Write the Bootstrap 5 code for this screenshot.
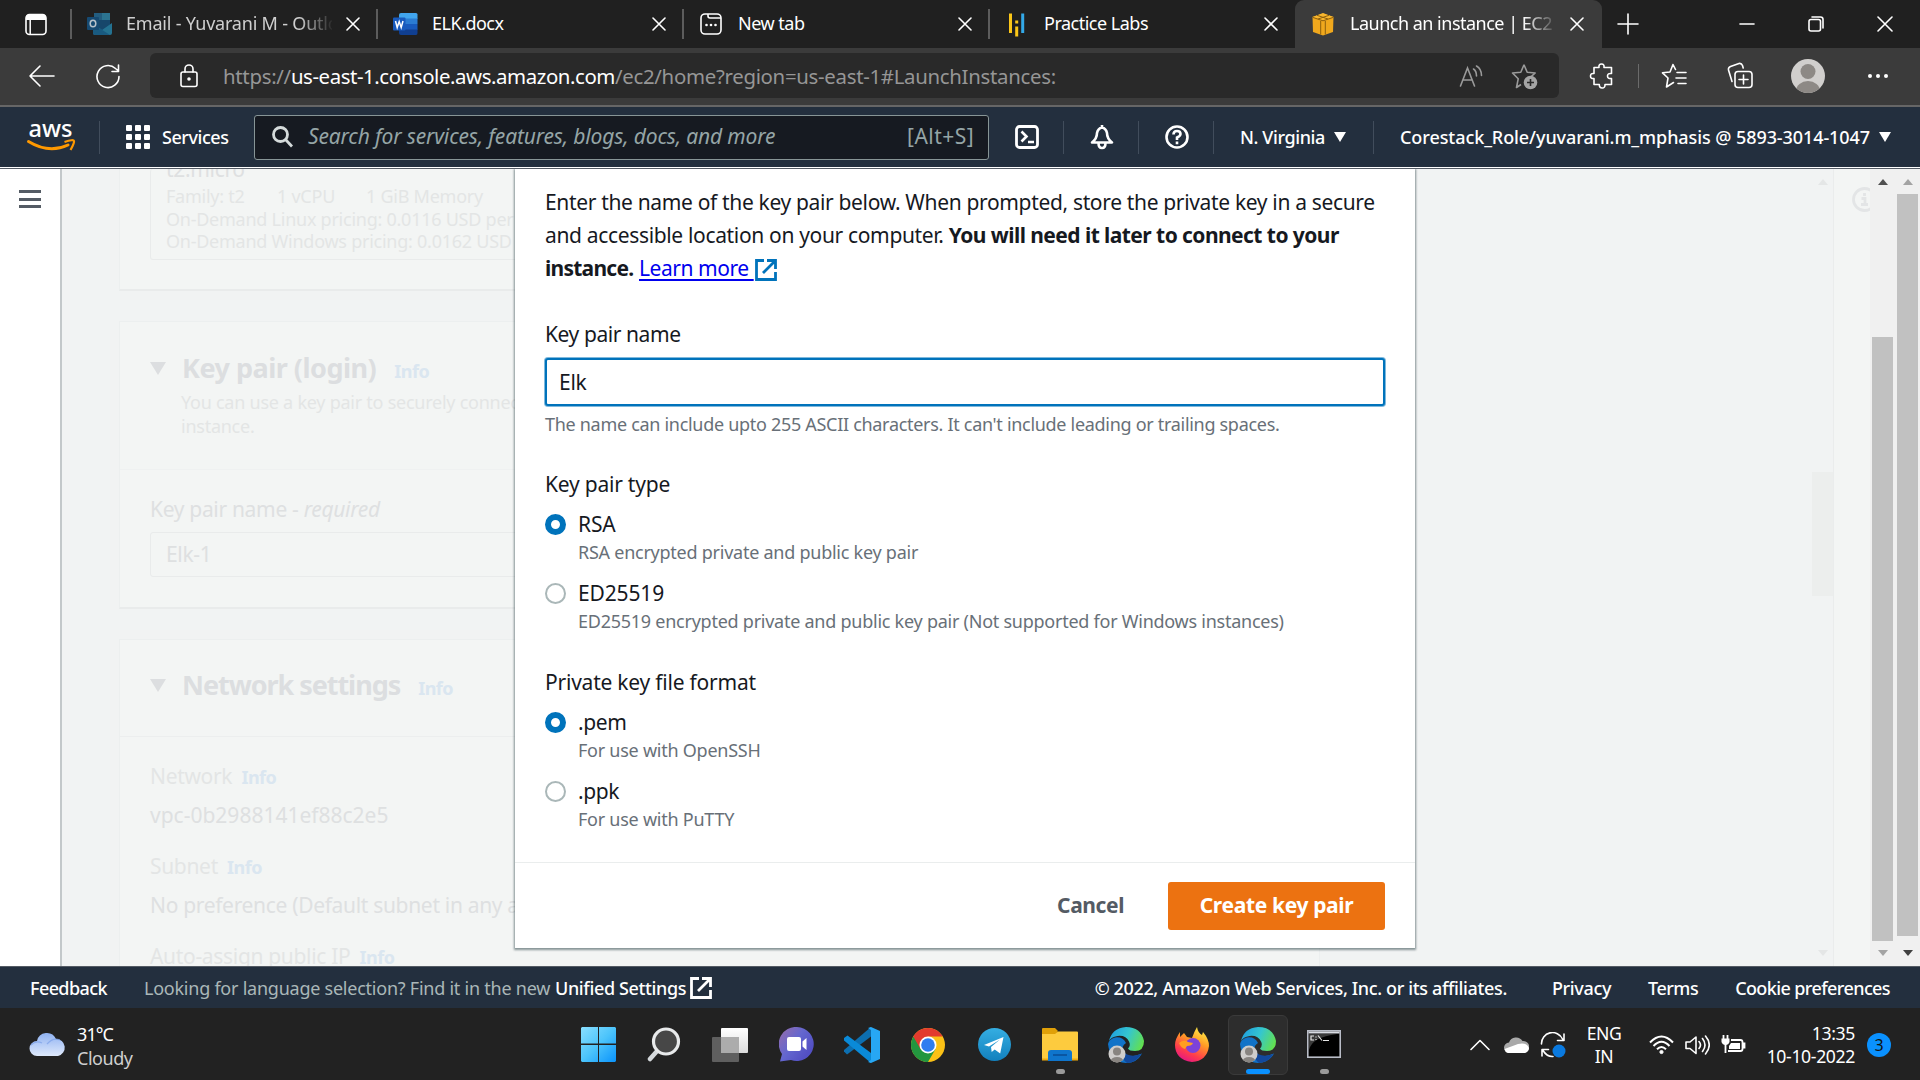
<!DOCTYPE html>
<html lang="en">
<head>
<meta charset="utf-8">
<meta name="viewport" content="width=device-width, initial-scale=1">
<title>Launch an instance | EC2 Management Console</title>
<link href="https://cdn.jsdelivr.net/npm/bootstrap@5.3.0/dist/css/bootstrap.min.css" rel="stylesheet">
<style>
  body { font-family: "Noto Sans", "Open Sans", sans-serif; width: 1920px; height: 1080px; overflow: hidden; color: #16191f; background: #f2f3f3; }
  svg { display: block; flex: none; }
  .ln { fill: none; stroke: #fff; stroke-width: 1.6; stroke-linecap: round; stroke-linejoin: round; }
  .nowrap-row { white-space: nowrap; }

  /* browser tabs */
  .tabstrip { height: 48px; background: #202020; font-size: 18px; color: #fff; }
  .tab-menu { width: 71px; padding-left: 25px; }
  .btab { width: 306px; height: 48px; padding: 0 17px 1px 14px; }
  .btab::before { content: ""; width: 2px; height: 30px; background: #5c5c5c; margin-left: -15px; margin-right: 15px; }
  .btab svg { margin-right: 14px; }
  .btab svg.x { margin-right: 0; }
  .btab-title { flex: 1; overflow: hidden; letter-spacing: -.5px; }
  .btab-title.fade-end { margin-right: 14px; -webkit-mask-image: linear-gradient(90deg, #000 84%, transparent 101%); mask-image: linear-gradient(90deg, #000 84%, transparent 101%); }
  .btab.active { background: #3b3b3b; border-radius: 9px 9px 0 0; width: 307px; padding-right: 18px; }
  .btab.active::before { background: transparent; }
  .tab-dim { letter-spacing: -.2px; color: #cfcfcf; }
  .w-ctl { gap: 44px; padding-right: 27px; }

  /* address row */
  .toolbar { height: 59px; background: #3b3b3b; border-bottom: 2px solid #666; padding: 0 31px 2px 28px; }
  .addr { width: 1409px; height: 45px; background: #292929; border-radius: 6px; margin-left: 29px; padding: 1px 21px 0 30px; font-size: 20.4px; color: #969696; letter-spacing: -.3px; }
  .addr b { font-weight: 400; color: #fff; letter-spacing: -.42px; }
  .v-rule { width: 1px; background: #6b6b6b; height: 24px; }

  /* console header */
  .console-head { height: 60px; background: #232f3e; color: #fff; font-size: 18px; font-weight: 500; padding-left: 27px; }
  .head-edge { height: 2px; background: #fff; border-bottom: 1px solid #545b64; }
  .h-sep { width: 1px; height: 33px; background: #414d5c; }
  .find-box { width: 735px; height: 45px; background: #161a21; border: 1px solid #879596; border-radius: 3px; margin-left: 25px; padding: 0 14px 0 17px; color: #95a5a6; font-size: 21px; font-weight: 400; letter-spacing: -.15px; }
  .caret { width: 0; height: 0; border: 6px solid transparent; border-top: 10px solid #fff; border-bottom: 0; }

  /* page */
  .stage { height: 797px; background: #f1f3f3; overflow: hidden; }
  .side { width: 62px; background: #fff; border-right: 2px solid #c3c8ca; padding: 21px 0 0 19px; }
  .side span { display: block; width: 22px; height: 3px; background: #545b64; margin-bottom: 4.5px; }
  .backdrop-area { flex: 1; padding-left: 57px; color: #e3e5e5; }
  .panel { width: 1201px; background: #f3f5f4; border: 1px solid #ecefef; border-bottom: 2px solid #e9ebeb; }
  .panel h2 { font-size: 27px; font-weight: 700; line-height: 36px; letter-spacing: -.5px; color: #dcdee0; margin: 0; }
  .panel .tight { letter-spacing: -1.05px; }
  .nfo { font-size: 18px; line-height: 20px; font-weight: 700; color: #dae6f0; letter-spacing: -.5px; }
  .t18 { font-size: 18px; line-height: 24px; letter-spacing: -.25px; }
  .t21 { font-size: 21px; line-height: 33px; letter-spacing: -.32px; }
  .strong-faint { color: #dee0e1; }
  .ghost-box { border: 1px solid #e9ebeb; border-radius: 3px; }
  .ghost-caret { width: 0; height: 0; border: 8px solid transparent; border-top: 13px solid #dcdee0; border-bottom: 0; margin-right: 16px; }
  .p1 { display: flow-root; height: 122px; padding: 0 30px 30px; }
  .p1 .ghost-box { display: flow-root; height: 91px; padding: 0 15px; }
  .p1 .cut { margin-top: -16px; line-height: 32px; }

  .kdialog { left: 515px; top: 169px; width: 900px; height: 779px; background: #fff; box-shadow: 0 1px 2px 1px rgba(0,28,36,.45); clip-path: inset(0 -4px -4px -4px); }
  .k-body { height: 694px; padding: 17px 30px 0; border-bottom: 1px solid #eaeded; }
  .k-body b { letter-spacing: -.56px; }
  .k-lbl { font-size: 21px; line-height: 33px; letter-spacing: -.22px; }
  .k-field { margin: 7px 0 5px; width: 840px; height: 48px; border: 2px solid #0073bb; border-radius: 3px; box-shadow: 0 0 0 1px #0073bb80; outline: 0; font-size: 21px; padding: 0 12px; letter-spacing: -.3px; color: #16191f; }
  .k-hint { font-size: 18px; line-height: 27px; color: #687078; letter-spacing: -.25px; }
  .k-opt { font-size: 21px; line-height: 30px; letter-spacing: -.15px; }
  .k-opt-row { margin-top: 12px; gap: 12px; }
  .k-lbl + .k-opt-row { margin-top: 8px; }
  .k-radio { width: 21px; height: 21px; border: 2px solid #aab7b8; border-radius: 50%; margin-top: 5px; flex: none; background: #fff; }
  .k-radio.on { border: 6.5px solid #0073bb; }
  .k-link { color: #0000ee; text-decoration: underline; text-underline-offset: 3px; text-decoration-thickness: 2px; letter-spacing: -.45px; }
  .k-foot { height: 85px; padding: 0 30px 0; }
  .k-go { width: 217px; height: 48px; background: #ec7211; color: #fff; border: 0; border-radius: 3px; font-size: 21px; font-weight: 700; padding: 0; letter-spacing: -.35px; }
  .k-cancel { font-size: 21px; font-weight: 700; color: #545b64; padding: 0; border: 0; margin-right: 44px; letter-spacing: -.4px; }

  .rail { width: 25px; background: #f0f0f0; padding: 10px 2px; }
  .rail .thumb { width: 21px; background: #c1c1c1; }
  .tri-u, .tri-d { width: 0; height: 0; border: 5.5px solid transparent; margin: 0 auto; }
  .tri-u { border-bottom: 6px solid #a3a3a3; border-top: 0; }
  .tri-d { border-top: 6px solid #a3a3a3; border-bottom: 0; margin-top: auto; }
  .tri-u.dark { border-bottom-color: #505050; }
  .tri-d.dark { border-top-color: #404040; }
  .tri-u.pale { border-bottom-color: #e4e6e6; }
  .tri-d.pale { border-top-color: #e4e6e6; }
  .inner-rail { width: 22px; padding: 10px 0; border-right: 1px solid #eaecec; }
  .inner-rail .thumb { width: 21px; height: 124px; margin-top: 287px; background: #eceeed; }
  .help-rail { width: 36px; background: #f3f5f4; overflow: hidden; padding: 18px 0 0 18px; }

  .console-foot { height: 42px; background: #232f3e; border-top: 1px solid #545b64; color: #fff; font-size: 18px; font-weight: 500; padding: 1px 30px 0; letter-spacing: -.36px; }
  .soft-copy { color: #aab7b8; font-weight: 400; letter-spacing: -.24px; }

  /* taskbar */
  .taskbar { height: 72px; background: #222; color: #fff; font-size: 18px; line-height: 24px; }
  .weather { width: 568px; padding-left: 29px; gap: 10px; letter-spacing: -.45px; }
  .dock { gap: 6px; }
  .app { width: 60px; height: 60px; border-radius: 6px; margin-top: 1px; }
  .app.current { background: #2d2d2d; border: 1px solid #3a3a3a; }
  .app .run { bottom: 1px; left: 26px; width: 9px; height: 5px; border-radius: 3px; background: #9a9a9a; }
  .app.current .run { left: 17px; width: 24px; background: #0a91ff; bottom: 0; }
  .tray { padding: 1px 29px 0 0; }
  .clock { width: 100px; font-size: 17.6px; letter-spacing: -.35px; line-height: 23px; margin-left: 9px; }
  .count { width: 24px; height: 24px; background: #0a91ff; color: #111; font-size: 16px; border-radius: 50%; margin-left: 12px; }
</style>
</head>
<body class="nowrap-row">

<!-- browser tab strip -->
<div class="tabstrip d-flex align-items-center">
  <div class="tab-menu"><svg width="22" height="23" viewBox="0 0 22 23"><rect x="1" y="1.5" width="20" height="20" rx="3.5" fill="none" stroke="#fff" stroke-width="1.6"/><path d="M1 7V4.5Q1 1.5 4 1.5H18Q21 1.500 21 4.5V7Z" fill="#fff"/><path d="M5.200 7V21" stroke="#fff" stroke-width="1.500"/></svg></div>

  <div class="btab d-flex align-items-center">
    <svg width="25" height="24" viewBox="0 0 25 24"><rect x="7" y="1" width="16" height="20" rx="1.500" fill="#17476b"/><path d="M7 1h8v7H7z" fill="#235d80"/><path d="M15 1h8v7h-8z" fill="#2c7491"/><path d="M6 11l9 7 10-7v10q0 2-2 2H8q-2 0-2-2z" fill="#247291"/><path d="M6 12l17 11H8q-2 0-2-2z" fill="#195a80"/><rect y="5" width="12" height="13" rx="1" fill="#164a72"/><ellipse cx="6" cy="11.500" rx="2.800" ry="3.300" fill="none" stroke="#b7c2cb" stroke-width="1.500"/></svg>
    <div class="btab-title fade-end tab-dim">Email - Yuvarani M - Outlook</div>
    <svg class="x ln" width="14" height="14" viewBox="0 0 14 14"><path d="M1 1l12 12M13 1L1 13"/></svg>
  </div>
  <div class="btab d-flex align-items-center">
    <svg width="25" height="24" viewBox="0 0 25 24"><path d="M6 3q0-2 2-2h15q1.500 0 1.500 1.500V7H6z" fill="#41a5ee"/><path d="M6 6.500h18.500V12H6z" fill="#2b7cd3"/><path d="M6 12h18.500v6H6z" fill="#185abd"/><path d="M6 17.500h18.500V21q0 2-1.500 2H8q-2 0-2-2z" fill="#103f91"/><rect y="5.500" width="12.500" height="13" rx="1" fill="#185abd"/><path d="M2.500 9l1.700 6.500L6.200 9.500l2 6L10 9" fill="none" stroke="#fff" stroke-width="1.500"/></svg>
    <div class="btab-title">ELK.docx</div>
    <svg class="x ln" width="14" height="14" viewBox="0 0 14 14"><path d="M1 1l12 12M13 1L1 13"/></svg>
  </div>
  <div class="btab d-flex align-items-center">
    <svg width="25" height="24" viewBox="0 0 25 24"><g fill="none" stroke="#fff" stroke-width="1.600"><rect x="2" y="2" width="20" height="20" rx="4"/><path d="M9 2v2q0 2 2 2h11"/></g><g fill="#fff"><circle cx="7.500" cy="13" r="1.300"/><circle cx="12" cy="13" r="1.300"/><circle cx="16.500" cy="13" r="1.300"/></g></svg>
    <div class="btab-title">New tab</div>
    <svg class="x ln" width="14" height="14" viewBox="0 0 14 14"><path d="M1 1l12 12M13 1L1 13"/></svg>
  </div>
  <div class="btab d-flex align-items-center">
    <svg width="25" height="26" viewBox="0 0 25 26"><path d="M4 2.500h3v19.500H4zM10.200 15.500h3v10h-3zM10.200 9.500h3v3h-3z" fill="#fbc618"/><path d="M16.200 2.500h3v19.500h-3z" fill="#33a9e8"/></svg>
    <div class="btab-title">Practice Labs</div>
    <svg class="x ln" width="14" height="14" viewBox="0 0 14 14"><path d="M1 1l12 12M13 1L1 13"/></svg>
  </div>
  <div class="btab active d-flex align-items-center">
    <svg width="25" height="24" viewBox="0 0 25 24"><path d="M1.500 5L12 1.500 22.500 5 22 20l-10 3.500L2 20z" fill="#f0a81d"/><path d="M1.500 5L12 1l10.500 4L12 8.500z" fill="#f8b62e"/><path d="M1.500 5.300L12 8.800l10.500-3.500M9.700 9v13.500M14.300 9v13.500M6 3.300L17 7M18 3.300L7 7" fill="none" stroke="#8d5f0e" stroke-width="1"/></svg>
    <div class="btab-title fade-end">Launch an instance | EC2 Management Console</div>
    <svg class="x ln" width="14" height="14" viewBox="0 0 14 14"><path d="M1 1l12 12M13 1L1 13"/></svg>
  </div>
  <svg class="ln" width="22" height="22" viewBox="0 0 22 22" style="margin-left:15px"><path d="M11 1v20M1 11h20"/></svg>
  <div class="w-ctl d-flex align-items-center ms-auto">
    <svg class="ln" width="16" height="16" viewBox="0 0 16 16"><path d="M1 8h14"/></svg>
    <svg class="ln" width="16" height="16" viewBox="0 0 16 16" style="margin-left:9px"><rect x="1" y="3.500" width="11.500" height="11.500" rx="2"/><path d="M4 1h8.500Q15 1 15 3.500V12"/></svg>
    <svg class="ln" width="16" height="16" viewBox="0 0 16 16" style="margin-left:9px"><path d="M1 1l14 14M15 1L1 15"/></svg>
  </div>
</div>

<!-- address row -->
<div class="toolbar d-flex align-items-center">
  <svg class="ln" width="27" height="24" viewBox="0 0 27 24"><path d="M26 12H2M12 2L2 12l10 10"/></svg>
  <svg class="ln" width="26" height="26" viewBox="0 0 26 26" style="margin-left:40px"><path d="M24 13.500A11 11 0 1 1 20.500 5.500L23.500 8M23.500 2v6.500h-6.500"/></svg>
  <div class="addr d-flex align-items-center">
    <svg class="ln" width="18" height="26" viewBox="0 0 18 26"><rect x="1" y="9" width="16" height="14.500" rx="2"/><path d="M5 9V6a4 4 0 0 1 8 0v3"/><circle cx="9" cy="16" r="1" fill="#fff"/></svg>
    <div style="margin-left:25px">https://<b>us-east-1.console.aws.amazon.com</b>/ec2/home?region=us-east-1#LaunchInstances:</div>
    <svg class="ms-auto" width="24" height="24" viewBox="0 0 24 24" fill="none" stroke="#9a9a9a" stroke-width="1.600" stroke-linecap="round"><path d="M1.500 22L8.500 4l7 18M4 16h9M14.500 5q3 2 3 7M17.500 2q5 3 5 9.500"/></svg>
    <svg width="27" height="27" viewBox="0 0 27 27" style="margin-left:28px"><path d="M13 1.800l3.200 7.400 8 .8-5.800 5.200 1 4M10 21.500l-4.500 3 1.700-8.700L1.500 10l8.300-.8L13 1.800" fill="none" stroke="#9a9a9a" stroke-width="1.600" stroke-linejoin="round"/><circle cx="19.500" cy="19.500" r="6.800" fill="#a4a4a4"/><path d="M19.500 16v7M16 19.500h7" stroke="#292929" stroke-width="1.600"/></svg>
  </div>
  <svg class="ln" width="25" height="26" viewBox="0 0 25 26" style="margin-left:30px"><path d="M5 4.500h5q-.5-3.500 2.500-3.500t2.500 3.500H22.500v6q-4-.5-4 2.500t4 2.500v6h-6.500q.2 3.500-2.800 3.500t-2.900-3.500H5v-6Q1.500 16 1.500 13T5 10.500z"/></svg>
  <div class="v-rule" style="margin-left:24px"></div>
  <svg class="ln" width="26" height="26" viewBox="0 0 26 26" style="margin-left:22px"><path d="M16 9.500h9M15 15h10M17 20.500h8M14.500 6.500L12 1.500 9 9l-7.500.8L7 15 5.500 24l7-4.500"/></svg>
  <svg class="ln" width="26" height="27" viewBox="0 0 26 27" style="margin-left:40px"><rect x="8" y="9.500" width="17" height="16" rx="3"/><path d="M16.500 13v9M12 17.500h9M5 19.500L1.500 8Q1 5.500 3.500 4.500L12 1.500q2.500-.5 3.500 2l.7 2.500"/></svg>
  <svg width="34" height="34" viewBox="0 0 34 34" style="margin-left:38px"><defs><clipPath id="av"><circle cx="17" cy="17" r="17"/></clipPath></defs><g clip-path="url(#av)"><rect width="34" height="34" fill="#d1cfcd"/><circle cx="17" cy="12.500" r="7.500" fill="#8d8985"/><ellipse cx="17" cy="32" rx="12" ry="10" fill="#8d8985"/></g></svg>
  <svg class="ms-auto" width="22" height="6" viewBox="0 0 22 6" fill="#fff"><circle cx="3" cy="3" r="2"/><circle cx="11" cy="3" r="2"/><circle cx="19" cy="3" r="2"/></svg>
</div>

<!-- console header -->
<nav class="console-head d-flex align-items-center">
  <svg width="48" height="32" viewBox="0 0 48 32" overflow="visible"><text x="1.500" y="16" font-family="Noto Sans" font-size="24" font-weight="500" fill="#fff" textLength="44" lengthAdjust="spacingAndGlyphs">aws</text><path d="M1.500 20.500Q22 33 41 24" fill="none" stroke="#f90" stroke-width="3" stroke-linecap="round"/><path d="M37.500 21q9-3 9.500-1t-3.500 9" fill="none" stroke="#f90" stroke-width="2.200"/></svg>
  <div class="h-sep" style="margin-left:24px"></div>
  <svg width="24" height="24" viewBox="0 0 24 24" fill="#fff" style="margin-left:26px"><rect width="6" height="6" rx="1"/><rect x="9" width="6" height="6" rx="1"/><rect x="18" width="6" height="6" rx="1"/><rect y="9" width="6" height="6" rx="1"/><rect x="9" y="9" width="6" height="6" rx="1"/><rect x="18" y="9" width="6" height="6" rx="1"/><rect y="18" width="6" height="6" rx="1"/><rect x="9" y="18" width="6" height="6" rx="1"/><rect x="18" y="18" width="6" height="6" rx="1"/></svg>
  <div style="width:67px;margin-left:12px;letter-spacing:-.45px">Services</div>
  <div class="find-box d-flex align-items-center">
    <svg width="21" height="22" viewBox="0 0 21 22" fill="none" stroke="#d5dbdb" stroke-width="2.800"><circle cx="8.500" cy="8.500" r="7"/><path d="M13.500 13.500l6.500 7"/></svg>
    <i style="margin-left:15px">Search for services, features, blogs, docs, and more</i>
    <span class="ms-auto" style="letter-spacing:.45px">[Alt+S]</span>
  </div>
  <svg width="24" height="24" viewBox="0 0 24 24" fill="none" stroke="#fff" stroke-width="2.800" style="margin-left:26px"><rect x="1.500" y="1.500" width="21" height="21" rx="3"/><path d="M6.500 6.500l5 5-5 5M13 17h6" stroke-width="2.600"/></svg>
  <div class="h-sep" style="margin-left:24px"></div>
  <svg width="24" height="25" viewBox="0 0 24 25" fill="none" stroke="#fff" stroke-width="2.600" style="margin-left:26px" stroke-linejoin="round"><path d="M2 17.500q5-4 5-9.500 1-4.500 5-5.500 4 1 5 5.500 0 5.500 5 9.500zM12 0v3M8.500 18q0 5 3.500 5t3.500-5"/></svg>
  <div class="h-sep" style="margin-left:24px"></div>
  <svg width="24" height="24" viewBox="0 0 24 24" fill="none" stroke="#fff" stroke-width="2.600" style="margin-left:26px"><circle cx="12" cy="12" r="10.500"/><path d="M8.500 9.500Q8.500 6 12 6t3.500 3Q15.500 11 12 12.500V15M12 16.500v2.700"/></svg>
  <div class="h-sep" style="margin-left:24px"></div>
  <div style="width:86px;margin-left:26px;letter-spacing:-.4px">N. Virginia</div>
  <span class="caret" style="margin-left:8px"></span>
  <div class="h-sep" style="margin-left:27px"></div>
  <div style="width:471px;margin-left:26px;letter-spacing:-.08px">Corestack_Role/yuvarani.m_mphasis @ 5893-3014-1047</div>
  <span class="caret" style="margin-left:8px"></span>
</nav>
<div class="head-edge"></div>

<!-- page behind the dialog -->
<main class="stage d-flex">
  <aside class="side flex-shrink-0"><span></span><span></span><span></span></aside>
  <div class="backdrop-area">
    <section class="panel p1 border-top-0">
      <div class="ghost-box border-top-0">
        <div class="t21 cut strong-faint">t2.micro</div>
        <div class="t18 d-flex" style="line-height:22.500px"><span style="width:111px">Family: t2</span><span style="width:89px">1 vCPU</span><span>1 GiB Memory</span></div>
        <div class="t18" style="line-height:22.500px">On-Demand Linux pricing: 0.0116 USD per Hour</div>
        <div class="t18" style="line-height:22.500px">On-Demand Windows pricing: 0.0162 USD per Hour</div>
      </div>
    </section>
    <section class="panel" style="margin-top:30px;height:288px;padding:28px 0 0 30px">
      <div class="d-flex align-items-center"><span class="ghost-caret"></span><h2>Key pair (login)</h2><span class="nfo" style="margin:5px 0 0 18px">Info</span></div>
      <div class="t18" style="margin:4px 0 0 31px">You can use a key pair to securely connect to your<br>instance.</div>
      <div style="margin:31px 0 0 -30px;border-top:1px solid #eff1f1;height:24px"></div>
      <div class="t21 strong-faint">Key pair name - <i>required</i></div>
      <div class="ghost-box t21 strong-faint" style="height:45px;line-height:42px;margin:6px 30px 0 0;padding-left:15px">Elk-1</div>
    </section>
    <section class="panel" style="margin-top:30px;height:400px;padding:27px 0 0 30px">
      <div class="d-flex align-items-center"><span class="ghost-caret"></span><h2 class="tight">Network settings</h2><span class="nfo" style="margin:5px 0 0 18px">Info</span></div>
      <div style="margin:33px 0 0 -30px;border-top:1px solid #eceeee;height:24px"></div>
      <div class="t21">Network <span class="nfo ms-1">Info</span></div>
      <div class="t21 strong-faint" style="margin-top:6px;letter-spacing:0">vpc-0b2988141ef88c2e5</div>
      <div class="t21" style="margin-top:18px">Subnet <span class="nfo ms-1">Info</span></div>
      <div class="t21 strong-faint" style="margin-top:6px">No preference (Default subnet in any availability zone)</div>
      <div class="t21" style="margin-top:18px">Auto-assign public IP <span class="nfo ms-1">Info</span></div>
    </section>
  </div>
  <div class="inner-rail d-flex flex-column"><span class="tri-u pale"></span><div class="thumb"></div><span class="tri-d pale"></span></div>
  <div class="help-rail"><svg width="25" height="25" viewBox="0 0 25 25" fill="none" stroke="#e3e5e6" stroke-width="2.800"><circle cx="12.500" cy="12.500" r="11"/><path d="M12.500 6v3M9.500 11.500h3.500V17M9 17.500h7"/></svg></div>
  <div class="rail d-flex flex-column"><span class="tri-u dark"></span><div class="thumb" style="margin-top:152px;height:604px"></div><span class="tri-d"></span></div>
  <div class="rail d-flex flex-column"><span class="tri-u"></span><div class="thumb" style="margin-top:9px;height:742px"></div><span class="tri-d dark"></span></div>
</main>

<!-- create key pair dialog -->
<div class="kdialog position-absolute">
  <div class="k-body">
    <div class="t21" style="letter-spacing:-.34px">Enter the name of the key pair below. When prompted, store the private key in a secure<br>and accessible location on your computer. <b>You will need it later to connect to your</b><br>
      <div class="d-flex"><b style="width:88px;letter-spacing:-.75px">instance.</b><a href="#" class="k-link" style="margin-left:6px;white-space:pre">Learn more </a><svg width="22" height="22" viewBox="0 0 22 22" fill="none" stroke="#0073bb" stroke-width="2.800" style="margin:7px 0 0 1px"><path d="M9 1.500H1.500v19h19V13M12 1.500h8.500V10M20 2L8 14"/></svg></div>
    </div>
    <div class="k-lbl" style="margin-top:33px;letter-spacing:-.42px">Key pair name</div>
    <input class="k-field d-block" type="text" value="Elk">
    <div class="k-hint" style="letter-spacing:-.3px">The name can include upto 255 ASCII characters. It can't include leading or trailing spaces.</div>
    <div class="k-lbl" style="margin-top:30px">Key pair type</div>
    <div class="k-opt-row d-flex"><span class="k-radio on"></span><div><div class="k-opt">RSA</div><div class="k-hint">RSA encrypted private and public key pair</div></div></div>
    <div class="k-opt-row d-flex"><span class="k-radio"></span><div><div class="k-opt">ED25519</div><div class="k-hint">ED25519 encrypted private and public key pair (Not supported for Windows instances)</div></div></div>
    <div class="k-lbl" style="margin-top:31px">Private key file format</div>
    <div class="k-opt-row d-flex"><span class="k-radio on"></span><div><div class="k-opt" style="letter-spacing:-.4px">.pem</div><div class="k-hint">For use with OpenSSH</div></div></div>
    <div class="k-opt-row d-flex"><span class="k-radio"></span><div><div class="k-opt" style="letter-spacing:-.4px">.ppk</div><div class="k-hint">For use with PuTTY</div></div></div>
  </div>
  <div class="k-foot d-flex align-items-center justify-content-end">
    <button class="btn k-cancel">Cancel</button>
    <button class="btn k-go">Create key pair</button>
  </div>
</div>

<!-- console footer -->
<footer class="console-foot d-flex align-items-center">
  <div style="width:114px;letter-spacing:-.6px">Feedback</div>
  <div class="soft-copy" style="width:411px">Looking for language selection? Find it in the new</div>
  <div>Unified Settings</div>
  <svg width="22" height="22" viewBox="0 0 22 22" fill="none" stroke="#fff" stroke-width="2.800" style="margin-left:4px"><path d="M9 1.500H1.500v19h19V13M12 1.500h8.500V10M20 2L8 14"/></svg>
  <div class="ms-auto">© 2022, Amazon Web Services, Inc. or its affiliates.</div>
  <div style="margin-left:45px">Privacy</div>
  <div style="margin-left:37px;letter-spacing:-.5px">Terms</div>
  <div style="margin-left:37px;letter-spacing:-.6px">Cookie preferences</div>
</footer>

<!-- taskbar -->
<div class="taskbar d-flex align-items-center">
  <div class="weather d-flex align-items-center">
    <svg width="38" height="26" viewBox="0 0 38 26"><defs><linearGradient id="cl" x1="0" y1="0" x2="0" y2="1"><stop offset="0" stop-color="#8fb2f2"/><stop offset="1" stop-color="#dfe9fb"/></linearGradient></defs><path d="M8 25a7.500 7.500 0 0 1 0-15A10 10 0 0 1 27 8a8.600 8.600 0 0 1 2 17z" fill="url(#cl)"/><path d="M2 14q5-5 11-2M18 13q6-7 13-4" fill="none" stroke="#7b9fe8" stroke-width="1.200" opacity=".7"/></svg>
    <div class="pt-1"><div style="letter-spacing:-.9px">31°C</div><div style="color:#cfcfcf">Cloudy</div></div>
  </div>
  <div class="dock d-flex">
    <div class="app d-flex align-items-center justify-content-center"><svg width="35" height="35" viewBox="0 0 35 35"><defs><linearGradient id="win" x1="0" y1="0" x2="1" y2="1"><stop offset="0" stop-color="#8adfff"/><stop offset=".5" stop-color="#4cc4fb"/><stop offset="1" stop-color="#0a93fb"/></linearGradient></defs><path d="M1 0h16v16.500H0V1zM18 0h16l1 1v15.500H18zM0 18h17v17H1l-1-1zM18 18h17v16l-1 1H18z" fill="url(#win)"/></svg></div>
    <div class="app d-flex align-items-center justify-content-center"><svg width="34" height="35" viewBox="0 0 34 35"><path d="M11 23L3 32" stroke="#d5d9dc" stroke-width="4.500" stroke-linecap="round"/><circle cx="19" cy="14.500" r="12.500" fill="#474747" stroke="#e8eaeb" stroke-width="3.200"/></svg></div>
    <div class="app d-flex align-items-center justify-content-center"><svg width="36" height="34" viewBox="0 0 36 34"><defs><linearGradient id="tv" x1="0" y1="0" x2="0" y2="1"><stop offset="0" stop-color="#fff"/><stop offset="1" stop-color="#dcdcdc"/></linearGradient></defs><rect x="9" width="27" height="25" rx="1" fill="url(#tv)"/><rect y="9" width="27" height="25" rx="1" fill="#5f5f5f"/><path d="M9 9h18v16H9z" fill="#acacac"/></svg></div>
    <div class="app d-flex align-items-center justify-content-center"><svg width="35" height="35" viewBox="0 0 35 35"><defs><linearGradient id="ch" x1="0" y1=".2" x2=".8" y2=".8"><stop offset="0" stop-color="#8f6bb0"/><stop offset=".5" stop-color="#6467cf"/><stop offset="1" stop-color="#5350c4"/></linearGradient></defs><path d="M18 0a17 17 0 1 1-6 33L1 34.500 3 27A17 17 0 0 1 18 0z" fill="url(#ch)"/><rect x="8" y="10" width="14" height="14" rx="2" fill="#fff"/><path d="M23.500 14.500l4-3.500v12l-4-3.500z" fill="#fff"/></svg></div>
    <div class="app d-flex align-items-center justify-content-center"><svg width="36" height="36" viewBox="0 0 36 36"><path d="M27 0v9.500L3 27.500 0 24.500V23z" fill="#0d6fb0"/><path d="M3.500 8.500L0 11v2.500L27 36V26z" fill="#0a8ad8"/><path d="M27 0l9 4v28l-9 4-3-1 3-2V3l-3-2z" fill="#27a7f4"/></svg></div>
    <div class="app d-flex align-items-center justify-content-center"><svg width="34" height="34" viewBox="0 0 34 34"><circle cx="17" cy="17" r="17" fill="#fbc116"/><path d="M17 17L2.300 8.500A17 17 0 0 0 17 34L24.400 21.200z" fill="#23963f"/><path d="M2.300 8.500A17 17 0 0 1 31.700 8.500H17L9.600 21.200z" fill="#e33b2e"/><circle cx="17" cy="17" r="8.500" fill="#fff"/><circle cx="17" cy="17" r="6.800" fill="#2f7df0"/></svg></div>
    <div class="app d-flex align-items-center justify-content-center"><svg width="33" height="33" viewBox="0 0 33 33"><defs><linearGradient id="tg" x1="0" y1="0" x2="0" y2="1"><stop offset="0" stop-color="#35aee2"/><stop offset="1" stop-color="#1280bd"/></linearGradient></defs><circle cx="16.500" cy="16.500" r="16.500" fill="url(#tg)"/><path d="M6 17L25.500 9l-3.300 16.500-5.500-4-3 2.500-.7-5 9-7.500-11 7z" fill="#fff"/></svg></div>
    <div class="app position-relative d-flex align-items-center justify-content-center"><svg width="36" height="33" viewBox="0 0 36 33"><path d="M0 1q0-1 1-1h12l3 3-3 5H0z" fill="#e0a008"/><path d="M0 6h13l3-2.500h19q1 0 1 1V32H0z" fill="#fdcb3e"/><path d="M6 33v-8q0-3 3-3h18q3 0 3 3v8z" fill="#0f75cc"/><path d="M11 27h14" stroke="#0a4d94" stroke-width="1.500"/><path d="M0 31.500h6M30 31.500h6" stroke="#eda90c" stroke-width="2"/></svg><span class="run position-absolute"></span></div>
    <div class="app d-flex align-items-center justify-content-center"><svg width="36" height="36" viewBox="0 0 36 36"><defs><linearGradient id="e1" x1="0" y1=".3" x2="1" y2=".6"><stop offset="0" stop-color="#1f9fe0"/><stop offset=".5" stop-color="#35c6cf"/><stop offset="1" stop-color="#63e04f"/></linearGradient><clipPath id="eb"><circle cx="9" cy="27" r="8.500"/></clipPath>
      <symbol id="edge" viewBox="0 0 36 36"><path d="M0 17Q1 12 7 10.500q8-1 11 5.500-5 3-3 9 5 6 13 3.500l6-2Q29 36 18 36 2 35 0 17z" fill="#1173c8"/><path d="M15 24q5 7 17 3.500l1.500-1Q29 35.500 19 36 13 32 15 24z" fill="#12489c"/><path d="M1 14Q4 1 18 0q15 0 18 14 0 10-9 10-6 0-7-2.500 3-3 1-7Q18 8 9.500 9 3 10 1 14z" fill="url(#e1)"/><g clip-path="url(#eb)"><rect y="18" width="18" height="18" fill="#cfcdcb"/><circle cx="9" cy="24.500" r="4" fill="#888480"/><ellipse cx="9" cy="34.500" rx="6.500" ry="4.500" fill="#888480"/></g></symbol></defs><use href="#edge"/></svg></div>
    <div class="app d-flex align-items-center justify-content-center"><svg width="34" height="35" viewBox="0 0 34 35"><defs><linearGradient id="ff" x1=".8" y1="0" x2=".3" y2="1"><stop offset="0" stop-color="#fff44a"/><stop offset=".4" stop-color="#ff9a25"/><stop offset=".75" stop-color="#ff3b4d"/><stop offset="1" stop-color="#e31587"/></linearGradient></defs><path d="M17 35C5 34 0 26 0 18q0-6 5-13v5l4-4 3 4 5 1q2-6 5-11 1 6 5 8l1-3q6 7 6 14-2 15-17 16z" fill="url(#ff)"/><circle cx="18" cy="18.500" r="7.500" fill="#7d42d8"/><path d="M4 16q5-4 9-1l5 1q-1 3-6 3l-2 3q-4-1-6-6z" fill="#ff9e22"/></svg></div>
    <div class="app current position-relative d-flex align-items-center justify-content-center"><svg width="36" height="36" viewBox="0 0 36 36"><use href="#edge"/></svg><span class="run position-absolute"></span></div>
    <div class="app position-relative d-flex align-items-center justify-content-center"><svg width="34" height="28" viewBox="0 0 34 28" style="margin-top:-2px"><rect x=".8" y=".8" width="32.400" height="26.400" fill="#000" stroke="#b9bdc7" stroke-width="1.600"/><path d="M1.500 1.500h31v2h-31z" fill="#d8dbe2"/><path d="M2 4h28Q5 7 2 20z" fill="#3a3a3a"/><path d="M7 6H4v4h3M9 6.500v1M9 9v1M11 5.500l4 5M16 10.500h6" stroke="#e6e6e6" stroke-width="1.200" fill="none"/></svg><span class="run position-absolute"></span></div>
  </div>
  <div class="tray d-flex align-items-center ms-auto">
    <svg class="ln" width="20" height="12" viewBox="0 0 20 12"><path d="M1 10.500l9-9 9 9"/></svg>
    <svg width="25" height="18" viewBox="0 0 25 18" style="margin-left:14px"><path d="M5.500 17A5.200 5.200 0 0 1 5 6.500 7.500 7.500 0 0 1 18.500 5 6 6 0 0 1 20 17z" fill="#a9a9a9"/><path d="M4 17q-3-1-3.500-4L14 8q9-2 11 4-.5 4-4 5z" fill="#fff"/></svg>
    <svg width="26" height="26" viewBox="0 0 26 26" style="margin-left:11px"><g class="ln"><path d="M1.500 12A11 11 0 0 1 22.500 7M24 2v6.500h-6.500M2 24v-6.500h6.500M3 18.500Q7 25 13 24.500"/></g><circle cx="19" cy="19" r="6.500" fill="#0a7ae0"/></svg>
    <div class="text-center" style="width:40px;margin-left:18px;line-height:23px;font-size:17.600px;letter-spacing:-.5px">ENG<br>IN</div>
    <svg width="25" height="20" viewBox="0 0 25 20" fill="none" stroke="#fff" stroke-width="2" style="margin-left:25px"><path d="M1 7.500Q12.500-4.500 24 7.500M4.500 11Q12.500 2.500 20.500 11M8 14.200q4.500-4.500 9 0"/><circle cx="12.500" cy="17" r="1.600" fill="#fff" stroke-width="1"/></svg>
    <svg class="ln" width="25" height="20" viewBox="0 0 25 20" style="margin-left:11px"><path d="M1 7v6.500h4l6 5V2L5 7zM14 6.500q3 3.500 0 7M17.500 3.500q5 6.500 0 13M20.500 1q7.500 9 0 18"/></svg>
    <svg width="25" height="20" viewBox="0 0 25 20" style="margin-left:11px"><path d="M10 5h9.500Q21.500 5 21.500 7v7q0 2-2 2H7M22 8.500h1.500v4H22z" fill="none" stroke="#fff" stroke-width="1.800"/><path d="M10 8h9v6H8v-3z" fill="#fff"/><path d="M2.500 0v4M6.500 0v4M4.500 9v9" stroke="#fff" stroke-width="1.800"/><path d="M.5 3.500h8V7q-1 3-4 3t-4-3z" fill="#fff"/></svg>
    <div class="clock text-end">13:35<br>10-10-2022</div>
    <div class="count d-flex align-items-center justify-content-center">3</div>
  </div>
</div>

<script src="https://cdn.jsdelivr.net/npm/bootstrap@5.3.0/dist/js/bootstrap.bundle.min.js"></script>
</body>
</html>
